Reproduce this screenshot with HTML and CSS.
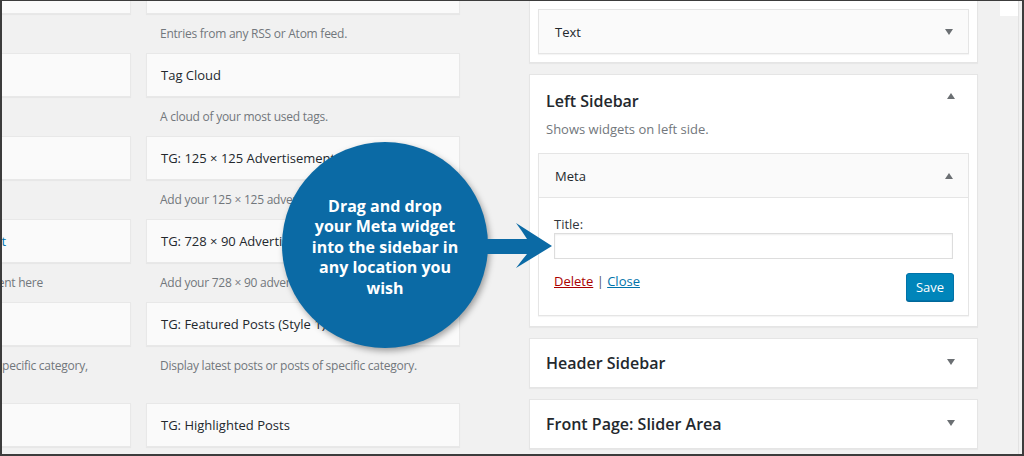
FILE: index.html
```html
<!DOCTYPE html>
<html>
<head>
<meta charset="utf-8">
<link rel="stylesheet" href="styles.css">
</head>
<body>
<div class="frame">
  <div class="cols">
    <div class="widgets">
      <div class="item"><div class="wbox">Recent Posts</div><p class="desc">Your site’s most recent Posts.</p></div>
      <div class="item"><div class="wbox">RSS</div><p class="desc">Entries from any RSS or Atom feed.</p></div>
      <div class="item"><div class="wbox">Search</div><p class="desc">A search form for your site.</p></div>
      <div class="item"><div class="wbox">Tag Cloud</div><p class="desc">A cloud of your most used tags.</p></div>
      <div class="item"><div class="wbox">Text</div><p class="desc">Arbitrary text.</p></div>
      <div class="item"><div class="wbox">TG: 125 × 125 Advertisement</div><p class="desc">Add your 125 × 125 advertisement here</p></div>
      <div class="item"><div class="wbox"><span class="blue">TG: 300 × 250 Advertisement</span></div><p class="desc">Add your 300 × 250 advertisement here</p></div>
      <div class="item"><div class="wbox">TG: 728 × 90 Advertisement</div><p class="desc">Add your 728 × 90 advertisement here</p></div>
      <div class="item"><div class="wbox">TG: Featured Category</div><p class="desc">Display latest posts or posts of specific category, including thumbnails.</p></div>
      <div class="item"><div class="wbox">TG: Featured Posts (Style 1)</div><p class="desc">Display latest posts or posts of specific category.</p></div>
      <div class="item"><div class="wbox">TG: Featured Posts (Style 2)</div><p class="desc"></p></div>
      <div class="item"><div class="wbox">TG: Highlighted Posts</div><p class="desc"></p></div>
    </div>

    <div class="side">
      <div class="sb sb-first">
        <div class="widget">
          <div class="whead"><span>Text</span><i class="tri down"></i></div>
        </div>
      </div>

      <div class="sb sb-open">
        <div class="sbhead"><h2>Left Sidebar</h2><i class="tri up"></i></div>
        <p class="sbdesc">Shows widgets on left side.</p>
        <div class="widget">
          <div class="whead"><span>Meta</span><i class="tri up"></i></div>
          <div class="wbody">
            <label class="lbl">Title:</label>
            <div class="input"></div>
            <div class="actions">
              <div class="links"><a class="del">Delete</a> | <a class="close">Close</a></div>
              <button class="save">Save</button>
            </div>
          </div>
        </div>
      </div>

      <div class="sb">
        <div class="sbhead closed"><h2>Header Sidebar</h2><i class="tri down"></i></div>
      </div>

      <div class="sb">
        <div class="sbhead closed"><h2>Front Page: Slider Area</h2><i class="tri down"></i></div>
      </div>
    </div>

    <div class="edge"><div class="edge-box"></div></div>
  </div>

  <div class="callout">
    <span>Drag and drop</span>
    <span>your Meta widget</span>
    <span>into the sidebar in</span>
    <span>any location you</span>
    <span>wish</span>
  </div>

  <svg class="arrow" viewBox="470 215 90 60" width="90" height="60">
    <path d="M470,239 L527,239 Q522,231 516,223 L552,246 L516,268 Q522,260 527,254 L470,254 Z" fill="#0b6aa5"/>
  </svg>
</div>
</body>
</html>
```

FILE: styles.css
```css
html, body {
  margin: 0;
  padding: 0;
}
body {
  font-family: "Open Sans", "Noto Sans", sans-serif;
  color: #23282d;
}
.frame {
  position: relative;
  width: 1024px;
  height: 456px;
  box-sizing: border-box;
  border-style: solid;
  border-color: #3c3c3c;
  border-width: 1px 2px 2px 2px;
  background: #f1f1f1;
  overflow: hidden;
}
.cols {
  display: flex;
  align-items: flex-start;
  margin-left: -185px;
}
.widgets {
  display: grid;
  grid-template-columns: 314px 314px;
  column-gap: 15px;
  margin-top: -31px;
  flex: none;
}
.item {
  display: flex;
  flex-direction: column;
}
.wbox {
  height: 44px;
  box-sizing: border-box;
  border: 1px solid #e8e8e8;
  background: #fafafa;
  box-shadow: 0 1px 1px rgba(0,0,0,0.04);
  padding: 0 14px;
  display: flex;
  align-items: center;
  font-size: 13px;
  white-space: nowrap;
  overflow: hidden;
}
.blue { color: #0073aa; }
.desc {
  margin: 0;
  padding: 11px 14px 10px;
  font-size: 12px;
  letter-spacing: -0.25px;
  line-height: 18px;
  color: #72777c;
  min-height: 18px;
}
.side {
  width: 449px;
  flex: none;
  margin-left: 69px;
  margin-top: -22px;
  display: flex;
  flex-direction: column;
  gap: 11px;
}
.sb {
  background: #fff;
  border: 1px solid #e5e5e5;
  box-shadow: 0 1px 1px rgba(0,0,0,0.04);
  box-sizing: border-box;
}
.sb-first {
  padding: 29px 8px 8px;
}
.sb-open {
  padding: 0 8px 10px;
}
.widget {
  border: 1px solid #e5e5e5;
  background: #fafafa;
  box-shadow: 0 1px 1px rgba(0,0,0,0.04);
}
.whead {
  height: 43px;
  display: flex;
  align-items: center;
  justify-content: space-between;
  padding: 0 15px 0 16px;
  font-size: 13px;
}
.sbhead {
  display: flex;
  justify-content: space-between;
  align-items: flex-start;
  padding: 15px 14px 0 8px;
}
.sbhead h2 {
  margin: 0;
  font-size: 16px;
  line-height: 22px;
  font-weight: 600;
}
.sbhead.closed {
  padding: 13px 22px 13px 16px;
}
.sbhead .tri { margin-top: 3px; }
.sbhead.closed .tri { margin-top: 7px; }
.sbdesc {
  margin: 8px 0 15px 8px;
  font-size: 13px;
  line-height: 18px;
  color: #72777c;
}
.tri {
  display: block;
  width: 0;
  height: 0;
  border-left: 4px solid transparent;
  border-right: 4px solid transparent;
}
.tri.down { border-top: 6px solid #6b6f73; }
.tri.up { border-bottom: 6px solid #6b6f73; }
.wbody {
  background: #fff;
  border-top: 1px solid #e5e5e5;
  padding: 17px 14px 14px 15px;
  display: flex;
  flex-direction: column;
}
.lbl {
  font-size: 13px;
  line-height: 18px;
  color: #32373c;
}
.input {
  height: 26px;
  box-sizing: border-box;
  border: 1px solid #ddd;
  box-shadow: inset 0 1px 2px rgba(0,0,0,0.07);
  background: #fff;
  margin-right: 1px;
}
.actions {
  display: flex;
  justify-content: space-between;
  align-items: flex-start;
  margin-top: 13px;
}
.links {
  font-size: 13px;
  line-height: 18px;
  color: #555;
}
.del { color: #a00; text-decoration: underline; }
.close { color: #0073aa; text-decoration: underline; }
.save {
  margin-top: 1px;
  width: 48px;
  height: 28px;
  box-sizing: border-box;
  background: #0085ba;
  border: 1px solid #0073aa;
  border-radius: 3px;
  box-shadow: 0 1px 0 #006799;
  color: #fff;
  font-family: "Open Sans", "Noto Sans", sans-serif;
  font-size: 13px;
  padding: 0;
}
.edge {
  margin-left: 22px;
  width: 18px;
  height: 460px;
  flex: none;
  border-right: 1px solid #e2e2e2;
  margin-top: -1px;
}
.edge-box {
  height: 16px;
  background: #fff;
}
.callout {
  position: absolute;
  left: 280px;
  top: 141px;
  width: 206px;
  height: 206px;
  border-radius: 50%;
  background: #0b6aa5;
  box-shadow: 2px 3px 6px rgba(0,0,0,0.35);
  display: flex;
  flex-direction: column;
  align-items: center;
  justify-content: center;
  color: #fff;
  font-family: "Open Sans", sans-serif;
  font-weight: 700;
  font-size: 16px;
  line-height: 20.5px;
  text-align: center;
  padding-top: 4px;
  box-sizing: border-box;
}
.arrow {
  position: absolute;
  left: 468px;
  top: 214px;
}
```
